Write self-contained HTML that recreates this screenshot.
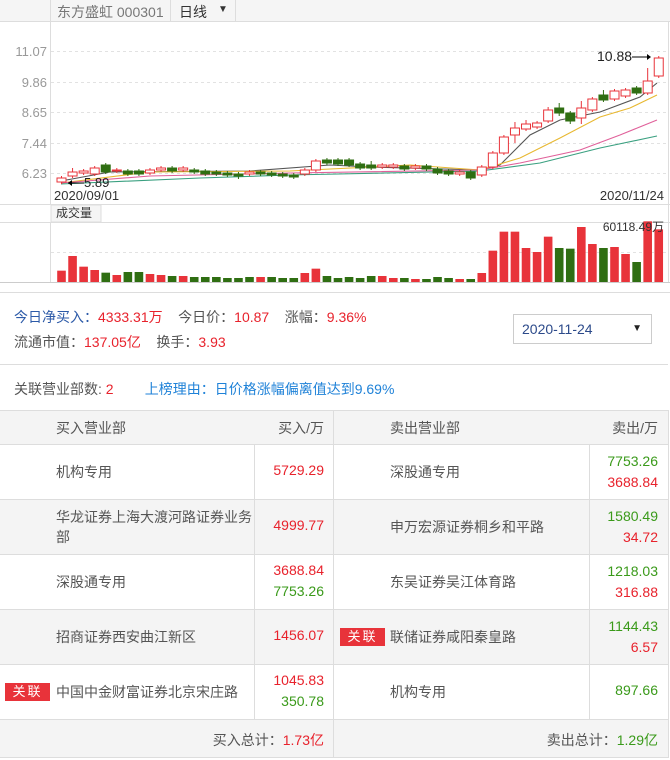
<!DOCTYPE html>
<html><head><meta charset="utf-8">
<style>
*{margin:0;padding:0;box-sizing:border-box}
body{width:670px;height:760px;background:#fff;font-family:"Liberation Sans","Noto Sans CJK SC",sans-serif;color:#555;font-size:14px;position:relative;overflow:hidden}
.a{position:absolute;white-space:nowrap}
.r{color:#e8222c}.g{color:#3a9a1a}.b{color:#2c5aa8}.lb{color:#1f82d8}
.tag{position:absolute;background:#e8333a;color:#fff;font-size:13px;width:45px;height:18px;line-height:18px;text-align:center;letter-spacing:2px}
.row{position:absolute;left:0;width:668px;border-bottom:1px solid #ddd}
.vl{position:absolute;width:1px;background:#ddd}
</style></head><body>
<!-- header bar -->
<div class="a" style="left:0;top:0;width:670px;height:22px;background:#f5f5f5;border-bottom:1px solid #ddd"></div>
<div class="a" style="left:50px;top:0;width:121px;height:22px;border-left:1px solid #ddd;border-right:1px solid #ddd"></div>
<div class="a" style="left:171px;top:0;width:65px;height:22px;border-right:1px solid #ddd"></div>
<div class="a" style="left:57px;top:2px;font-size:14px;color:#777">东方盛虹 000301</div>
<div class="a" style="left:179px;top:2px;font-size:14px;color:#333">日线</div>
<div class="a" style="left:218px;top:4px;font-size:10px;color:#333">▼</div>
<svg class="a" style="left:0;top:0" width="670" height="290" id="ch">
<line x1="50.5" y1="22" x2="50.5" y2="205" stroke="#ddd"/>
<line x1="50.5" y1="222" x2="50.5" y2="282" stroke="#ddd"/>
<g stroke="#e2e2e2" stroke-dasharray="3,3">
<line x1="51" y1="51.5" x2="668" y2="51.5"/><line x1="51" y1="82.5" x2="668" y2="82.5"/><line x1="51" y1="112.5" x2="668" y2="112.5"/><line x1="51" y1="143.5" x2="668" y2="143.5"/><line x1="51" y1="173.5" x2="668" y2="173.5"/><line x1="51" y1="252.5" x2="668" y2="252.5"/>
</g>
<g font-size="13" fill="#999" font-family="Liberation Sans" text-anchor="end">
<text x="47" y="56">11.07</text><text x="47" y="87">9.86</text><text x="47" y="117">8.65</text><text x="47" y="148">7.44</text><text x="47" y="178">6.23</text>
</g>
<line x1="0" y1="204.5" x2="670" y2="204.5" stroke="#ddd"/>
<rect x="51" y="205" width="50" height="17" fill="#f5f5f5" stroke="#ddd"/>
<text x="56" y="217" font-size="12" fill="#333" font-family="Liberation Sans,Noto Sans CJK SC">成交量</text>
<line x1="0" y1="222.5" x2="670" y2="222.5" stroke="#ddd"/>
<line x1="0" y1="282.5" x2="670" y2="282.5" stroke="#ccc"/>
<line x1="668.5" y1="22" x2="668.5" y2="282" stroke="#ddd"/>
<g fill="none" stroke-width="1.1">
<polyline stroke="#555" points="61,181 110,172 250,171 330,165 370,167 480,170 500,165 530,135 560,120 600,112 640,97 657,83"/>
<polyline stroke="#e8b830" points="61,183 150,172 290,171 410,165 480,170 520,158 560,138 600,117 630,108 657,95"/>
<polyline stroke="#e0609a" points="61,183 150,176 290,173 480,170 520,163 580,150 620,135 657,120"/>
<polyline stroke="#3aa080" points="61,184 200,178 290,175 480,171 540,163 600,148 657,136"/>
</g>
<g id="cd"></g>
<g font-family="Liberation Sans" font-size="13" fill="#333">
<text x="54" y="200">2020/09/01</text><text x="664" y="200" text-anchor="end">2020/11/24</text>
<text x="84" y="187" fill="#222">5.89</text><text x="597" y="61" font-size="14" fill="#222">10.88</text>
<text x="664" y="231" text-anchor="end" font-size="12" fill="#333">60118.49万</text>
</g>
<line x1="68" y1="183" x2="84" y2="183" stroke="#000"/><path d="M68 183l4-3v6z" fill="#000"/>
<line x1="632" y1="57" x2="648" y2="57" stroke="#000"/><path d="M651 57l-4-3v6z" fill="#000"/>
</svg>
<script>
var C=[[178,182,1],[172,176,1,168],[171,173,1],[168,174,1,166],[165,172,0],[170,171,1],[171,174,0],[171,174,0],[170,173,1],[168,170,1],[168,171,0],[168,170,1],[170,172,0],[171,174,0],[172,174,0],[173,175,0],[174,176,0,172,179],[172,174,1],[172,174,0],[173,175,0],[174,176,0],[175,177,0],[170,174,1],[161,170,1],[160,163,0],[160,164,0],[160,165,0],[164,168,0],[165,168,0,161],[165,167,1],[165,167,1],[166,169,0],[166,168,1],[166,169,0],[169,173,0],[171,174,0],[172,174,1],[172,178,0],[167,175,1],[153,167,1],[137,153,1,135],[128,135,1,122,143],[124,129,1,120],[123,127,1],[110,121,1,107],[108,113,0,103,116],[113,121,0,111,124],[108,118,1,101,124],[99,110,1],[95,100,0,90],[91,99,1],[90,96,1],[88,93,0],[81,93,1,68],[58,76,1]];
var V=[812,768,800,810,818,825,816,816,822,825,828,828,831,831,831,834,834,831,831,831,834,834,819,806,828,834,831,834,828,828,834,834,837,837,831,834,837,837,819,752,695,695,744,756,710,744,746,681,732,744,741,762,786,664,688];
var s='';
for(var i=0;i<C.length;i++){var x=61.5+i*11.06,c=C[i],col=c[2]?'#e8333a':'#2f6e12';
var hi=c[3]||c[0]-2,lo=c[4]||c[1]+2;
s+='<line x1="'+x+'" x2="'+x+'" y1="'+hi+'" y2="'+lo+'" stroke="'+col+'"/>';
s+='<rect x="'+(x-4.5)+'" y="'+c[0]+'" width="9" height="'+Math.max(1,c[1]-c[0])+'" fill="'+(c[2]?'#fff':col)+'" stroke="'+col+'"/>';
var vy=V[i]/3,vc=(i==4||i==6||i==7||i==10||(i>=12&&i<=17)||i==19||i==20||i==21||(i>=24&&i<=28)||i==31||i==33||i==34||i==35||i==37||i==45||i==46||i==49||i==52)?'#2f6e12':'#e8333a';
s+='<rect x="'+(x-4.3)+'" y="'+vy+'" width="8.6" height="'+(282-vy)+'" fill="'+vc+'"/>';}
document.getElementById('cd').innerHTML=s;
</script>
<div class="a" style="left:0;top:292px;width:670px;border-top:1px solid #ddd"></div>
<div class="a" style="left:14px;top:307px"><span class="b">今日净买入：</span><span class="r">4333.31万</span>&nbsp;&nbsp;&nbsp;&nbsp;今日价：<span class="r">10.87</span>&nbsp;&nbsp;&nbsp;&nbsp;涨幅：<span class="r">9.36%</span></div>
<div class="a" style="left:14px;top:332px">流通市值：<span class="r">137.05亿</span>&nbsp;&nbsp;&nbsp;&nbsp;换手：<span class="r">3.93</span></div>
<div class="a" style="left:513px;top:314px;width:139px;height:30px;border:1px solid #ccc;color:#2c4a8a;padding:6px 0 0 8px">2020-11-24<span style="position:absolute;right:9px;top:8px;font-size:10px;color:#222">▼</span></div>
<div class="a" style="left:0;top:364px;width:668px;border-top:1px solid #ddd"></div>
<div class="a" style="left:14px;top:379px">关联营业部数: <span class="r">2</span>&nbsp;&nbsp;&nbsp;&nbsp;&nbsp;&nbsp;&nbsp;&nbsp;<span class="lb">上榜理由：日价格涨幅偏离值达到9.69%</span></div>
<!-- table -->
<div class="row" style="top:410px;height:35px;background:#f4f4f4;border-top:1px solid #ddd"></div>
<div class="row" style="top:445px;height:55px"></div>
<div class="row" style="top:500px;height:55px;background:#f4f4f4"></div>
<div class="row" style="top:555px;height:55px"></div>
<div class="row" style="top:610px;height:55px;background:#f4f4f4"></div>
<div class="row" style="top:665px;height:55px"></div>
<div class="row" style="top:720px;height:38px;background:#f4f4f4"></div>
<div class="vl" style="left:333px;top:410px;height:348px"></div>
<div class="vl" style="left:254px;top:445px;height:275px"></div>
<div class="vl" style="left:589px;top:445px;height:275px"></div>
<div class="vl" style="left:668px;top:410px;height:348px"></div>
<div class="a" style="left:56px;top:418px">买入营业部</div>
<div class="a" style="right:346px;top:418px">买入/万</div>
<div class="a" style="left:390px;top:418px">卖出营业部</div>
<div class="a" style="right:12px;top:418px">卖出/万</div>

<div class="a" style="left:56px;top:462px">机构专用</div>
<div class="a r" style="right:346px;top:462px">5729.29</div>
<div class="a" style="left:390px;top:462px">深股通专用</div>
<div class="a g" style="right:12px;top:453px">7753.26</div>
<div class="a r" style="right:12px;top:474px">3688.84</div>

<div class="a" style="left:56px;top:507px;line-height:20px;white-space:normal;width:200px">华龙证券上海大渡河路证券业务部</div>
<div class="a r" style="right:346px;top:517px">4999.77</div>
<div class="a" style="left:390px;top:517px">申万宏源证券桐乡和平路</div>
<div class="a g" style="right:12px;top:508px">1580.49</div>
<div class="a r" style="right:12px;top:529px">34.72</div>

<div class="a" style="left:56px;top:572px">深股通专用</div>
<div class="a r" style="right:346px;top:562px">3688.84</div>
<div class="a g" style="right:346px;top:583px">7753.26</div>
<div class="a" style="left:390px;top:572px">东吴证券吴江体育路</div>
<div class="a g" style="right:12px;top:563px">1218.03</div>
<div class="a r" style="right:12px;top:584px">316.88</div>

<div class="a" style="left:56px;top:627px">招商证券西安曲江新区</div>
<div class="a r" style="right:346px;top:627px">1456.07</div>
<div class="tag" style="left:340px;top:628px">关联</div>
<div class="a" style="left:390px;top:627px">联储证券咸阳秦皇路</div>
<div class="a g" style="right:12px;top:618px">1144.43</div>
<div class="a r" style="right:12px;top:639px">6.57</div>

<div class="tag" style="left:5px;top:683px">关联</div>
<div class="a" style="left:56px;top:682px">中国中金财富证券北京宋庄路</div>
<div class="a r" style="right:346px;top:672px">1045.83</div>
<div class="a g" style="right:346px;top:693px">350.78</div>
<div class="a" style="left:390px;top:682px">机构专用</div>
<div class="a g" style="right:12px;top:682px">897.66</div>

<div class="a" style="right:346px;top:730px">买入总计：<span class="r">1.73亿</span></div>
<div class="a" style="right:12px;top:730px">卖出总计：<span class="g">1.29亿</span></div>
</body></html>
